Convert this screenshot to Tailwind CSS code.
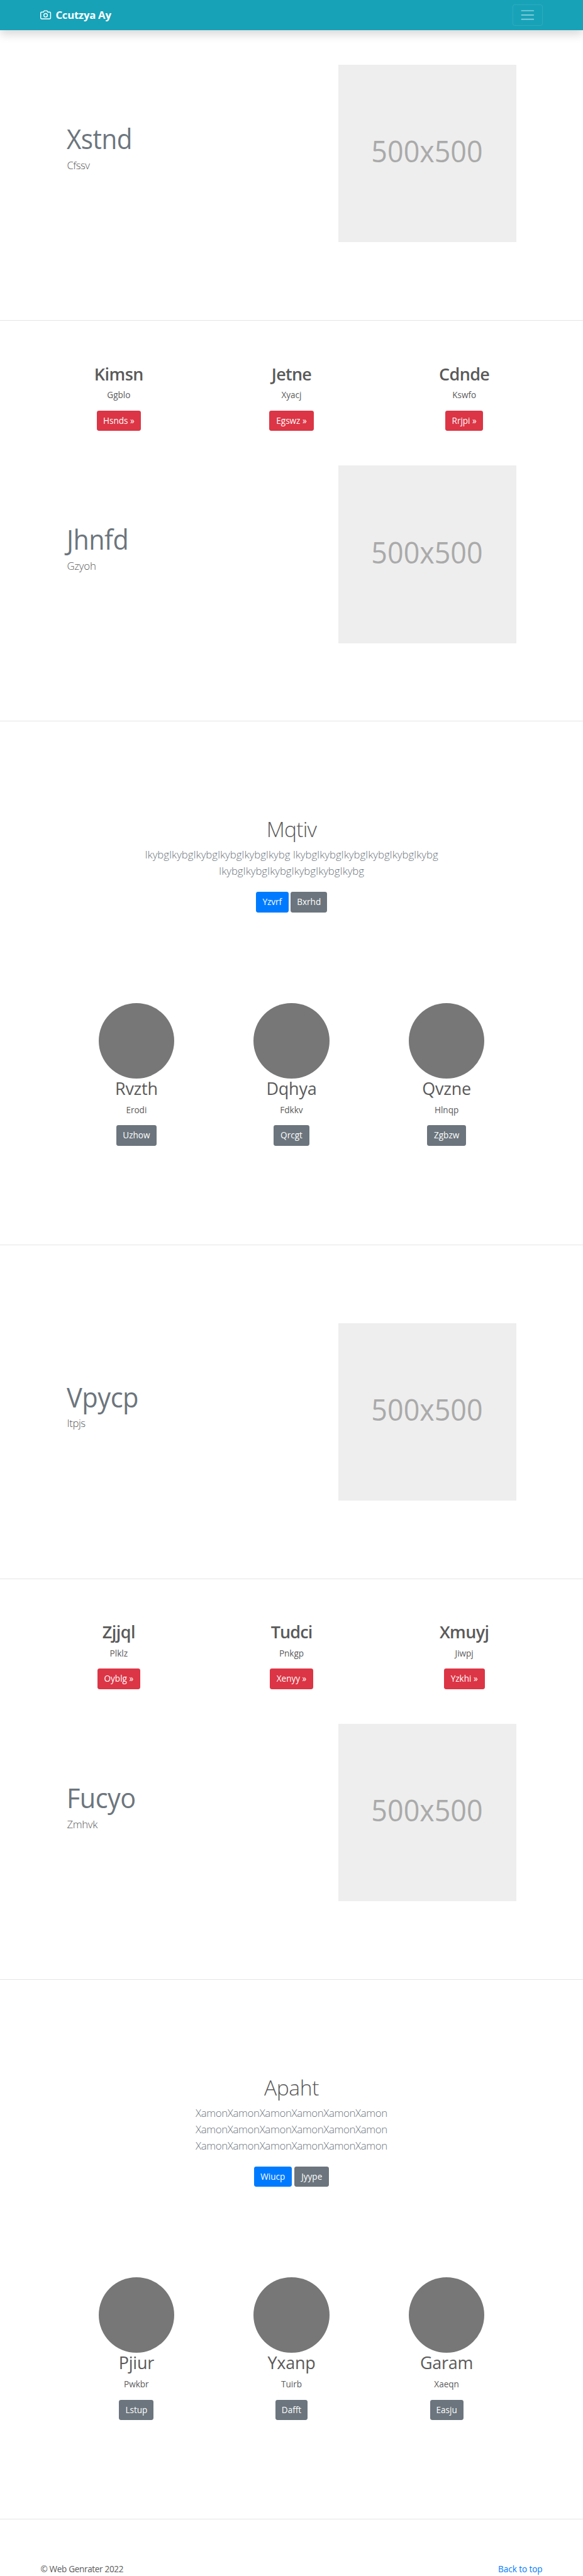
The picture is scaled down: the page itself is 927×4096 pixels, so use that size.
<!DOCTYPE html>
<html lang="en">
<head>
<meta charset="utf-8">
<title>Ccutzya Ay</title>
<script src="https://cdn.jsdelivr.net/npm/@tailwindcss/browser@4"></script>
</head>
<body class="bg-white overflow-x-hidden">
<div class="[zoom:0.85833] w-[1080px] h-[4772px] font-['Open_Sans',sans-serif] text-[15.8px] leading-6 text-[#5a5a5a]">

  <header class="h-14 bg-[#17a2b8] shadow-[0_8px_16px_rgba(0,0,0,0.15)]">
    <div class="mx-auto w-[930px] h-full flex items-center justify-between">
      <a class="flex items-center gap-2 text-white">
        <svg class="size-5" viewBox="0 0 24 24" fill="none" stroke="currentColor" stroke-width="2" stroke-linecap="round" stroke-linejoin="round"><path d="M23 19a2 2 0 0 1-2 2H3a2 2 0 0 1-2-2V8a2 2 0 0 1 2-2h4l2-3h6l2 3h4a2 2 0 0 1 2 2z"/><circle cx="12" cy="13" r="4"/></svg>
        <strong class="font-bold text-[19.6px] leading-[30px] tracking-[-0.33px]">Ccutzya Ay</strong>
      </a>
      <button class="w-14 h-10 rounded border border-white/10 flex items-center justify-center" aria-label="Menu">
        <svg class="size-[30px]" viewBox="0 0 30 30" fill="none" stroke="rgba(255,255,255,0.5)" stroke-width="2" stroke-linecap="round"><path d="M4 7h22M4 15h22M4 23h22"/></svg>
      </button>
    </div>
  </header>

  <main>
    <!-- Featurette -->
    <section class="mt-16 pl-[124px] pr-[124px] flex justify-between">
      <div class="pt-[113px]">
        <h2 class="text-[50px] leading-[50px] tracking-[-0.6px] scale-x-[0.94] origin-left text-[#6c757d]">Xstnd</h2>
        <p class="mt-2 text-[19.6px] leading-[30px] font-light tracking-[-0.7px]">Cfssv</p>
      </div>
      <div class="size-[329px] bg-[#eee] pb-[9px] flex items-center justify-center text-[56px] leading-none text-[#aaa]"><span class="scale-x-[0.933]">500x500</span></div>
    </section>
    <hr class="mt-36 border-t border-black/10">

    <!-- Three columns -->
    <section class="mt-20 mx-auto w-[960px] grid grid-cols-3 text-center">
      <div>
        <h2 class="text-[31.4px] leading-[38.4px] font-semibold tracking-[-0.6px]">Kimsn</h2>
        <p class="mt-2">Ggblo</p>
        <a class="mt-4 mx-auto block w-[82px] h-[38px] rounded bg-[#dc3545] text-white leading-[38px] whitespace-nowrap">Hsnds »</a>
      </div>
      <div>
        <h2 class="text-[31.4px] leading-[38.4px] font-semibold tracking-[-0.8px]">Jetne</h2>
        <p class="mt-2">Xyacj</p>
        <a class="mt-4 mx-auto block w-[82px] h-[38px] rounded bg-[#dc3545] text-white leading-[38px] whitespace-nowrap">Egswz »</a>
      </div>
      <div>
        <h2 class="text-[31.4px] leading-[38.4px] font-semibold tracking-[-0.7px]">Cdnde</h2>
        <p class="mt-2">Kswfo</p>
        <a class="mt-4 mx-auto block w-[70px] h-[38px] rounded bg-[#dc3545] text-white leading-[38px] whitespace-nowrap">Rrjpi »</a>
      </div>
    </section>

    <!-- Featurette -->
    <section class="mt-[64px] pl-[124px] pr-[124px] flex justify-between">
      <div class="pt-[113px]">
        <h2 class="text-[50px] leading-[50px] tracking-[-0.6px] scale-x-[0.96] origin-left text-[#6c757d]">Jhnfd</h2>
        <p class="mt-2 text-[19.6px] leading-[30px] font-light tracking-[-0.3px]">Gzyoh</p>
      </div>
      <div class="size-[329px] bg-[#eee] pb-[9px] flex items-center justify-center text-[56px] leading-none text-[#aaa]"><span class="scale-x-[0.933]">500x500</span></div>
    </section>
    <hr class="mt-36 border-t border-black/10">

    <!-- Call to action -->
    <section class="mt-44 text-center">
      <h1 class="text-[39.2px] leading-[48px] font-light tracking-[-0.95px]">Mqtiv</h1>
      <p class="mt-2 text-[19.6px] leading-[30px] font-light tracking-[-0.08px] text-[#6c757d]">IkybgIkybgIkybgIkybgIkybgIkybg IkybgIkybgIkybgIkybgIkybgIkybg<br>IkybgIkybgIkybgIkybgIkybgIkybg</p>
      <div class="mt-6 flex justify-center gap-[4.6px] text-white leading-[38px]">
        <a class="w-[60px] h-[38px] rounded bg-[#007bff]">Yzvrf</a>
        <a class="w-[67px] h-[38px] rounded bg-[#6c757d]">Bxrhd</a>
      </div>
    </section>

    <!-- Round portraits -->
    <section class="mt-[167.6px] mx-auto w-[862px] grid grid-cols-3 text-center">
      <div>
        <div class="size-[140px] mx-auto rounded-full bg-[#777]"></div>
        <h2 class="text-[31.4px] leading-[38.4px] tracking-[-0.25px]">Rvzth</h2>
        <p class="mt-2">Erodi</p>
        <a class="mt-4 mx-auto block w-[74px] h-[38px] rounded bg-[#6c757d] text-white leading-[38px]">Uzhow</a>
      </div>
      <div>
        <div class="size-[140px] mx-auto rounded-full bg-[#777]"></div>
        <h2 class="text-[31.4px] leading-[38.4px] tracking-[-0.25px]">Dqhya</h2>
        <p class="mt-2">Fdkkv</p>
        <a class="mt-4 mx-auto block w-[66px] h-[38px] rounded bg-[#6c757d] text-white leading-[38px]">Qrcgt</a>
      </div>
      <div>
        <div class="size-[140px] mx-auto rounded-full bg-[#777]"></div>
        <h2 class="text-[31.4px] leading-[38.4px] tracking-[-0.25px]">Qvzne</h2>
        <p class="mt-2">Hlnqp</p>
        <a class="mt-4 mx-auto block w-[73px] h-[38px] rounded bg-[#6c757d] text-white leading-[38px]">Zgbzw</a>
      </div>
    </section>
    <hr class="mt-[183.2px] border-t border-black/10">

    <!-- Featurette -->
    <section class="mt-36 pl-[124px] pr-[124px] flex justify-between">
      <div class="pt-[113px]">
        <h2 class="text-[50px] leading-[50px] tracking-[-0.6px] scale-x-[0.97] origin-left text-[#6c757d]">Vpycp</h2>
        <p class="mt-2 text-[19.6px] leading-[30px] font-light tracking-[-0.5px]">Itpjs</p>
      </div>
      <div class="size-[329px] bg-[#eee] pb-[9px] flex items-center justify-center text-[56px] leading-none text-[#aaa]"><span class="scale-x-[0.933]">500x500</span></div>
    </section>
    <hr class="mt-36 border-t border-black/10">

    <!-- Three columns -->
    <section class="mt-20 mx-auto w-[960px] grid grid-cols-3 text-center">
      <div>
        <h2 class="text-[31.4px] leading-[38.4px] font-semibold tracking-[-0.6px]">Zjjql</h2>
        <p class="mt-2">Plklz</p>
        <a class="mt-4 mx-auto block w-[80px] h-[38px] rounded bg-[#dc3545] text-white leading-[38px] whitespace-nowrap">Oyblg »</a>
      </div>
      <div>
        <h2 class="text-[31.4px] leading-[38.4px] font-semibold tracking-[-1px]">Tudci</h2>
        <p class="mt-2">Pnkgp</p>
        <a class="mt-4 mx-auto block w-[80px] h-[38px] rounded bg-[#dc3545] text-white leading-[38px] whitespace-nowrap">Xenyy »</a>
      </div>
      <div>
        <h2 class="text-[31.4px] leading-[38.4px] font-semibold tracking-[-0.7px]">Xmuyj</h2>
        <p class="mt-2">Jiwpj</p>
        <a class="mt-4 mx-auto block w-[76px] h-[38px] rounded bg-[#dc3545] text-white leading-[38px] whitespace-nowrap">Yzkhi »</a>
      </div>
    </section>

    <!-- Featurette -->
    <section class="mt-[64px] pl-[124px] pr-[124px] flex justify-between">
      <div class="pt-[113px]">
        <h2 class="text-[50px] leading-[50px] tracking-[-0.6px] scale-x-[0.965] origin-left text-[#6c757d]">Fucyo</h2>
        <p class="mt-2 text-[19.6px] leading-[30px] font-light tracking-[-0.4px]">Zmhvk</p>
      </div>
      <div class="size-[329px] bg-[#eee] pb-[9px] flex items-center justify-center text-[56px] leading-none text-[#aaa]"><span class="scale-x-[0.933]">500x500</span></div>
    </section>
    <hr class="mt-36 border-t border-black/10">

    <!-- Call to action -->
    <section class="mt-44 text-center">
      <h1 class="text-[39.2px] leading-[48px] font-light tracking-[-0.5px]">Apaht</h1>
      <p class="mt-2 text-[19.6px] leading-[30px] font-light tracking-[-0.41px] text-[#6c757d]">XamonXamonXamonXamonXamonXamon<br>XamonXamonXamonXamonXamonXamon<br>XamonXamonXamonXamonXamonXamon</p>
      <div class="mt-6 flex justify-center gap-[4.6px] text-white leading-[38px]">
        <a class="w-[70.5px] h-[38px] rounded bg-[#007bff]">Wiucp</a>
        <a class="w-[64.5px] h-[38px] rounded bg-[#6c757d]">Jyype</a>
      </div>
    </section>

    <!-- Round portraits -->
    <section class="mt-[167.6px] mx-auto w-[862px] grid grid-cols-3 text-center">
      <div>
        <div class="size-[140px] mx-auto rounded-full bg-[#777]"></div>
        <h2 class="text-[31.4px] leading-[38.4px] tracking-[-0.25px]">Pjiur</h2>
        <p class="mt-2">Pwkbr</p>
        <a class="mt-4 mx-auto block w-[64px] h-[38px] rounded bg-[#6c757d] text-white leading-[38px]">Lstup</a>
      </div>
      <div>
        <div class="size-[140px] mx-auto rounded-full bg-[#777]"></div>
        <h2 class="text-[31.4px] leading-[38.4px] tracking-[-0.25px]">Yxanp</h2>
        <p class="mt-2">Tuirb</p>
        <a class="mt-4 mx-auto block w-[60px] h-[38px] rounded bg-[#6c757d] text-white leading-[38px]">Dafft</a>
      </div>
      <div>
        <div class="size-[140px] mx-auto rounded-full bg-[#777]"></div>
        <h2 class="text-[31.4px] leading-[38.4px] tracking-[-0.25px]">Garam</h2>
        <p class="mt-2">Xaeqn</p>
        <a class="mt-4 mx-auto block w-[62px] h-[38px] rounded bg-[#6c757d] text-white leading-[38px]">Easju</a>
      </div>
    </section>
    <hr class="mt-[183.2px] border-t border-black/10">
  </main>

  <footer class="mt-[79.5px] mx-auto w-[930px] flex justify-between">
    <p class="tracking-[-0.38px]">© Web Genrater 2022</p>
    <a class="tracking-[-0.07px] text-[#007bff]">Back to top</a>
  </footer>
</div>
</body>
</html>
